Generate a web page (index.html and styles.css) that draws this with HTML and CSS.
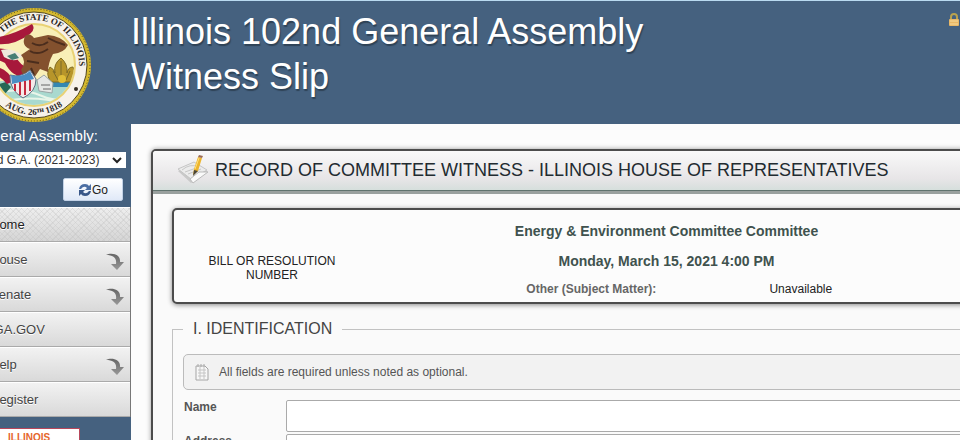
FILE: index.html
```html
<!DOCTYPE html>
<html lang="en">
<head>
<meta charset="utf-8">
<title>Illinois 102nd General Assembly Witness Slip</title>
<link rel="stylesheet" href="styles.css">
</head>
<body>
<svg width="0" height="0" class="defs" aria-hidden="true">
  <defs>
    <linearGradient id="arrowFill" x1="0" y1="0" x2="0" y2="1"><stop offset="0" stop-color="#666"/><stop offset="1" stop-color="#999"/></linearGradient>
    <symbol id="arrow" viewBox="0 0 18 18"><path d="M0 2C5-1 15 1 14 9H18L11 17 5 11H10C11 5 7 2 0 2Z" fill="url(#arrowFill)"/></symbol>
  </defs>
</svg>
<div class="page">
  <aside class="sidebar">
    <svg class="seal" viewBox="0 0 116 116" role="img" aria-label="Seal of the State of Illinois">
      <defs>
        <path id="arcRight" d="M13 58A45 45 0 0 1 103 58A45 45 0 0 1 58 103"/>
        <path id="arcBottom" d="M8 58A50 50 0 0 0 108 58"/>
        <clipPath id="inner"><circle cx="58" cy="58" r="40"/></clipPath>
      </defs>
      <circle cx="58" cy="58" r="57" fill="#d5b92e"/>
      <circle cx="58" cy="58" r="56" fill="none" stroke="#51481f" stroke-width="1" stroke-dasharray="1 2"/>
      <circle cx="58" cy="58" r="53" fill="#f7f2ea" stroke="#51461c" stroke-width="1"/>
      <circle cx="58" cy="58" r="41" fill="#f8efb7" stroke="#e9d275" stroke-width="2"/>
      <g clip-path="url(#inner)">
        <path d="M10 76Q50 70 106 74V106H10Z" fill="#a9d9cf"/>
        <path d="M70 75H104V80H68Z" fill="#3487b2"/>
        <path d="M20 86Q44 80 66 89T100 86M28 94Q58 88 88 96" fill="none" stroke="#e8f5e9" stroke-width="2"/>
        <path d="M75 75Q69 67 74 60Q78 62 79 66Q77 57 85 51Q92 57 91 66Q92 60 97 60Q101 67 97 75Z" fill="#b7952a" stroke="#806b22"/>
        <path d="M77 64L82 73M85 54V72M94 64L90 73" stroke="#7a6a28"/>
        <circle cx="86" cy="72" r="4" fill="#dfbd38"/>
        <path d="M61 73L68 68 77 76 76 86 63 84Z" fill="#e5e7e5" stroke="#9aa5a5"/>
        <path d="M65 78H74M67 82H75" stroke="#666"/>
        <path d="M20 78L30 75 35 80 29 87 36 92 22 94Z" fill="#246855"/>
      </g>
      <path d="M22 30Q37 28 56 17Q60 22 54 27Q38 39 20 37ZM17 42Q33 40 39 48Q44 59 53 61L49 70Q36 70 29 56Q22 52 15 53ZM16 60Q29 59 38 74L31 77Q24 68 16 68Z" fill="#a7183b"/>
      <path d="M25 43Q36 40 47 49Q39 57 28 50Z" fill="#eee9dc"/>
      <path d="M31 49L39 46 43 51 36 53Z" fill="#467e75"/>
      <path d="M49 29Q54 25 58 31L72 28Q85 29 92 38Q88 46 77 47Q72 56 72 65L64 62 58 71 49 73 45 63Q51 54 45 48L54 42Q45 39 49 29Z" fill="#83512e"/>
      <path d="M56 36Q64 41 72 35M54 44Q62 49 72 42M51 54L63 56M55 61L58 68M72 31Q79 35 89 38" fill="none" stroke="#4b2d1d" stroke-width="2"/>
      <path d="M34 68Q45 71 54 63L60 72Q60 85 47 91Q33 83 34 68Z" fill="#f5e9e9" stroke="#5d6d81"/>
      <path d="M35 68Q46 71 54 64L58 72 36 77Z" fill="#4a8dc3"/>
      <path d="M39 77V84M44 75V88M49 74V88M54 73V84" stroke="#c42b40" stroke-width="2"/>
      <text class="seal-text"><textPath href="#arcRight" startOffset="35">THE STATE OF ILLINOIS</textPath></text>
      <text class="seal-text" text-anchor="middle"><textPath href="#arcBottom" startOffset="50%">AUG. 26ᵀᴴ 1818</textPath></text>
      <circle cx="100" cy="82" r="2" fill="#342b20"/>
    </svg>
    <form class="session">
      <label for="ga">General Assembly:</label>
      <div class="select-wrap">
        <select id="ga"><option>102nd G.A. (2021-2023)</option></select>
        <svg class="chevron" viewBox="0 0 10 7" aria-hidden="true"><path d="M1 1L5 5 9 1" fill="none" stroke="#222" stroke-width="2"/></svg>
      </div>
      <button type="button" class="go"><svg viewBox="0 0 14 14" aria-hidden="true"><path d="M1 6Q2 1 7 1Q10 1 11 3L13 1V7H7L9 5Q6 2 3 6Z" fill="#4b6ea3"/><path d="M13 8Q12 13 7 13Q4 13 3 11L1 13V7H7L5 9Q8 12 11 8Z" fill="#395789"/></svg>Go</button>
    </form>
    <nav>
      <a href="#" class="current">Home</a>
      <a href="#">House<svg aria-hidden="true"><use href="#arrow"/></svg></a>
      <a href="#">Senate<svg aria-hidden="true"><use href="#arrow"/></svg></a>
      <a href="#">&nbsp;GA.GOV</a>
      <a href="#">Help<svg aria-hidden="true"><use href="#arrow"/></svg></a>
      <a href="#">Register</a>
    </nav>
    <a href="#" class="promo">ILLINOIS</a>
  </aside>
  <div class="content">
    <header>
      <h1>Illinois 102nd General Assembly<br>Witness Slip</h1>
      <svg class="lock" viewBox="0 0 12 14" role="img" aria-label="Secure"><path d="M3 7V4a3 3 0 0 1 6 0V7" fill="none" stroke="#b9a24e" stroke-width="2"/><rect x="1" y="6" width="10" height="7" rx="1" fill="#e9b867"/><path d="M2 8H10M2 11H10" stroke="#f6db9d"/></svg>
    </header>
    <main>
      <section class="panel">
        <h2>
          <svg viewBox="0 0 32 30" aria-hidden="true"><path d="M1 16L18 8 31 17 14 28Z" fill="#c9c9c9"/><path d="M1 14L17 7 30 15 14 24Z" fill="#ececec" stroke="#c5c5c5"/><path d="M5 15Q13 8 22 12M8 17L22 12M11 19L24 14" fill="none" stroke="#c7c7c7"/><path d="M13 24L22 17 31 17 16 28Z" fill="#fafafa" stroke="#bbb"/><path d="M16 20L17 14 21 2 25 3 21 16Z" fill="#edb52d"/><path d="M21 2L22 0 26 1 25 3Z" fill="#9b6b55"/><path d="M17 15L21 16 16 21Z" fill="#4b4638"/><path d="M22 3L18 14" stroke="#ffe080"/></svg>
          Record of Committee Witness - Illinois House of Representatives
        </h2>
        <div class="panel-body">
          <div class="hearing">
            <div class="bill">BILL OR RESOLUTION NUMBER</div>
            <div class="details">
              <h3>Energy &amp; Environment Committee Committee</h3>
              <h3>Monday, March 15, 2021 4:00 PM</h3>
              <dl><dt>Other (Subject Matter):</dt><dd>Unavailable</dd></dl>
            </div>
          </div>
          <fieldset>
            <legend>I. IDENTIFICATION</legend>
            <p class="note"><svg viewBox="0 0 14 17" aria-hidden="true"><path d="M1 2H10L13 5V16H1Z" fill="#f7f7f7" stroke="#a5a5a5"/><path d="M3 6H11M3 9H11M3 12H11M5 3V15M9 3V15" stroke="#c5c5c5"/><path d="M3 0V3M6 0V3M9 0V3" stroke="#aaa"/></svg>All fields are required unless noted as optional.</p>
            <div class="field"><label for="name">Name</label><input id="name" type="text"></div>
            <div class="field"><label for="address">Address</label><input id="address" type="text"></div>
          </fieldset>
        </div>
      </section>
    </main>
  </div>
</div>
</body>
</html>
```
FILE: styles.css
```css
* { box-sizing: border-box; }
html { height: 100%; overflow: hidden; }
body {
  margin: 0;
  height: 100%;
  overflow: hidden;
  background: #45617f;
  border-top: 1px solid #b9daf0;
  font-family: "Liberation Sans", Arial, sans-serif;
  font-size: 12px;
  color: #444;
}
.defs { display: block; }
/* The page is wider than the window and is scrolled slightly to the right. */
.page {
  display: grid;
  grid-template-columns: 161px 1fr;
  margin: 0 -70px 0 -30px;
  min-height: 100%;
}
.seal { display: block; width: 116px; height: 116px; margin: 6px 0 0 6px; }
.seal-text { font: bold 9px "Liberation Serif", serif; fill: #29251e; }
.session { display: flex; flex-direction: column; padding: 4px 5px 6px 0; }
.session label { color: #fff; font-size: 15px; line-height: 18px; padding-left: 2px; }
.select-wrap { display: flex; align-items: center; margin-top: 7px; }
select {
  appearance: none;
  width: 100%;
  height: 16px;
  padding: 0;
  border: 0;
  background: #fff;
  color: #333;
  font: 12px/16px "Liberation Sans", Arial, sans-serif;
}
.chevron { flex: none; width: 10px; height: 7px; margin: 0 4px 0 -14px; pointer-events: none; }
.go {
  align-self: flex-end;
  display: flex;
  align-items: center;
  justify-content: center;
  width: 60px;
  height: 23px;
  margin: 10px 3px 0 0;
  padding: 0;
  border: 1px solid #c3d2e6;
  border-radius: 2px;
  background: linear-gradient(#fff, #e0e9f8);
  color: #222;
  font: 12px "Liberation Sans", Arial, sans-serif;
}
.go svg { width: 14px; height: 14px; }
nav { border-right: 1px solid #777; }
nav a {
  display: flex;
  align-items: center;
  justify-content: space-between;
  height: 35px;
  padding: 0 6px 0 20px;
  border-top: 1px solid #fff;
  border-bottom: 1px solid #aaa;
  background: linear-gradient(#f2f2f2, #d9d9d9);
  color: #444;
  font-size: 13px;
  text-decoration: none;
  text-shadow: 0 1px 0 #fff;
}
nav a svg { width: 18px; height: 18px; margin-top: 4px; }
nav .current {
  color: #222;
  background:
    repeating-linear-gradient(45deg, transparent 0 3px, #bbbbbb44 3px 4px),
    repeating-linear-gradient(-45deg, transparent 0 3px, #bbbbbb44 3px 4px),
    linear-gradient(#eee, #d5d5d5);
}
.promo {
  display: block;
  width: 110px;
  height: 60px;
  margin-top: 11px;
  padding: 3px 0 0 37px;
  border: 1px solid #b8475b;
  background: #fff;
  color: #e5662b;
  font: bold 10px/12px "Liberation Sans Narrow", "Liberation Sans", sans-serif;
  text-decoration: none;
}
.content { display: flex; flex-direction: column; min-width: 0; }
header {
  display: flex;
  justify-content: space-between;
  padding: 8px 70px 25px 0;
}
h1 {
  margin: 0;
  color: #fff;
  font-size: 36px;
  line-height: 45px;
  font-weight: normal;
  text-shadow: 1px 2px 1px #2f4357;
}
.lock { width: 12px; height: 14px; margin-top: 4px; }
main { flex: 1; padding: 25px 20px 20px; background: #fcfcfc; }
.panel {
  border: 2px solid #4c4c4c;
  border-radius: 5px;
  background: #fafafa;
  box-shadow: 0 0 5px #999;
}
h2 {
  display: flex;
  align-items: center;
  height: 43px;
  margin: 0;
  padding: 0 24px 2px;
  border-bottom: 3px solid #99a09e;
  border-radius: 3px 3px 0 0;
  background: linear-gradient(#f9f9f9, #e7e5e7 70%, #d4dedb);
  box-shadow: inset 0 -1px #60736e;
  color: #222b30;
  font-size: 18px;
  font-weight: normal;
  text-transform: uppercase;
}
h2 svg { flex: none; width: 32px; height: 30px; margin-right: 6px; }
.panel-body { padding: 14px 19px 20px; }
.hearing {
  display: grid;
  grid-template-columns: 196px 1fr;
  align-items: center;
  min-height: 96px;
  border: 2px solid #4c4c4c;
  border-radius: 5px;
  background: #fcfcfc;
  box-shadow: 0 1px 5px #888;
}
.bill { padding: 24px 30px 0; color: #222; line-height: 14px; text-align: center; }
.details { padding: 6px 24px 0 0; text-align: center; }
h3 { margin: 0 0 10px; color: #40524e; font-size: 14px; line-height: 20px; }
dl { display: grid; grid-template-columns: 5fr 3fr; margin: 0; line-height: 16px; }
dt { padding-left: 72px; font-weight: bold; color: #666; }
dd { margin: 0; padding-right: 102px; color: #222; }
fieldset {
  min-width: 0;
  margin: 15px 0 0;
  padding: 15px 10px 10px;
  border: 1px solid #c2c2c2;
}
legend { margin-left: 0; padding: 0 10px; color: #444; font-size: 16px; line-height: 20px; }
.note {
  display: flex;
  align-items: center;
  gap: 10px;
  height: 36px;
  margin: 0 0 10px;
  padding: 0 11px;
  border: 1px solid #bbb;
  border-radius: 5px;
  background: #f2f2f2;
  color: #555;
}
.note svg { width: 14px; height: 17px; }
.field { display: grid; grid-template-columns: 103px 1fr; margin-bottom: 2px; }
.field label { padding-left: 1px; color: #555; font-weight: bold; line-height: 14px; }
input {
  width: 100%;
  height: 32px;
  padding: 0 8px;
  border: 1px solid #aaa;
  border-radius: 2px;
  background: #fff;
}
```
